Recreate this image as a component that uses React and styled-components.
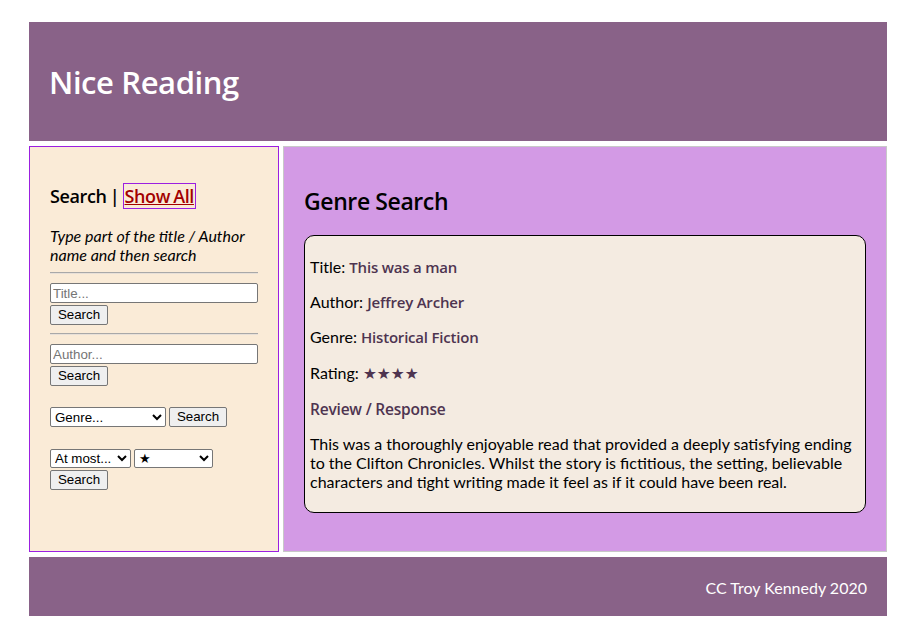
import React from "react";
import styled, { createGlobalStyle } from "styled-components";

const Global = createGlobalStyle`
  html, body { margin: 0; padding: 0; background: #ffffff; }
  body { font-family: "Lato", "Liberation Sans", sans-serif; font-size: 16px; color: #000; }
`;

const heading = `"Open Sans", "Noto Sans", sans-serif`;

const Page = styled.div`
  width: 858px;
  margin: 22px 0 0 29px;
  display: grid;
  grid-template-columns: 250px 604px;
  column-gap: 4px;
  row-gap: 5px;
`;

const Header = styled.header`
  grid-column: 1 / -1;
  height: 119px;
  background: #896288;
  display: flex;
  align-items: center;
  padding: 0 20px;
  box-sizing: border-box;
`;

const Title = styled.h1`
  margin: 0;
  font-family: ${heading};
  font-weight: 600;
  font-size: 31px;
  letter-spacing: -0.4px;
  color: #ffffff;
  line-height: 1;
  padding-top: 1px;
`;

const Aside = styled.aside`
  background: #faebd7;
  border: 1px solid #9b1fe0;
  padding: 20px;
  display: flex;
  flex-direction: column;
  align-items: flex-start;
`;

const SideHeading = styled.h3`
  margin: 18px 0 0;
  font-family: ${heading};
  font-weight: 600;
  font-size: 18px;
  letter-spacing: -0.4px;
  word-spacing: -1px;
  line-height: 22px;
  color: #000;
`;

const ShowAll = styled.a`
  color: #a30000;
  text-decoration: underline;
  border: 1px solid #9b1fe0;
  padding: 0 1px;
`;

const Hint = styled.p`
  margin: 19px 0 0;
  font-style: italic;
  font-size: 16px;
  line-height: 19px;
`;

const Rule = styled.hr`
  align-self: stretch;
  margin: 8px 0 9px;
  border: 0;
  border-top: 1px solid #a8a8a8;
  border-bottom: 1px solid #e8e0d8;
  height: 0;
`;

const TextInput = styled.input`
  box-sizing: border-box;
  width: 208px;
  height: 20px;
  margin: 0;
  padding: 1px 2px;
  border: 1px solid #767676;
  border-radius: 2px;
  background: #fff;
  font-family: "Liberation Sans", Arial, sans-serif;
  font-size: 13.33px;
  &::placeholder { color: #757575; }
`;

const Button = styled.button`
  box-sizing: border-box;
  height: 20px;
  width: 58px;
  margin: ${(p) => p.$top || 0}px 0 0;
  padding: 0 6px;
  border: 1px solid #767676;
  border-radius: 2px;
  background: #efefef;
  color: #000;
  font-family: "Liberation Sans", Arial, sans-serif;
  font-size: 13.33px;
  line-height: 16px;
`;

const Row = styled.div`
  display: flex;
  align-items: center;
  gap: 3px;
  margin-top: ${(p) => p.$top}px;
`;

const Select = styled.select`
  box-sizing: border-box;
  width: ${(p) => p.$w}px;
  height: ${(p) => p.$h || 20}px;
  margin: 0;
  padding: 0;
  border: 1px solid #767676;
  border-radius: 2px;
  background: #fff;
  color: #000;
  font-family: "Liberation Sans", Arial, sans-serif;
  font-size: 13.33px;
`;

const Main = styled.main`
  background: #d39ae5;
  border: 1px solid #c8c8c8;
  padding: 20px 20px 38px;
`;

const MainHeading = styled.h2`
  margin: 20px 0 20px;
  font-family: ${heading};
  font-weight: 600;
  font-size: 23px;
  letter-spacing: -0.4px;
  line-height: 28px;
  color: #000;
`;

const Card = styled.section`
  background: #f4ebe1;
  border: 1px solid #000;
  border-radius: 10px;
  padding: 5px;
`;

const Line = styled.p`
  margin: ${(p) => p.$top || 16}px 0 16px;
  font-size: 16px;
  line-height: 19px;
`;

const Value = styled.span`
  font-family: ${heading};
  font-weight: 600;
  font-size: 15px;
  letter-spacing: -0.2px;
  line-height: 15px;
  color: #4e3450;
`;

const Stars = styled.span`
  color: #4e3450;
  font-family: "DejaVu Sans", sans-serif;
  font-size: 15.5px;
  line-height: 15px;
`;

const Review = styled.h4`
  margin: 18px 0 15px;
  font-family: ${heading};
  font-weight: 600;
  font-size: 15.5px;
  letter-spacing: -0.2px;
  line-height: 19px;
  color: #4e3450;
`;

const Footer = styled.footer`
  grid-column: 1 / -1;
  height: 59px;
  background: #896288;
  display: flex;
  align-items: center;
  justify-content: flex-end;
  padding: 1px 20px 0;
  box-sizing: border-box;
  color: #ffffff;
  font-size: 16px;
`;

export default function App() {
  return (
    <>
      <Global />
      <Page>
        <Header>
          <Title>Nice Reading</Title>
        </Header>
        <Aside>
          <SideHeading>
            Search | <ShowAll href="#">Show All</ShowAll>
          </SideHeading>
          <Hint>Type part of the title / Author name and then search</Hint>
          <Rule />
          <TextInput placeholder="Title..." />
          <Button $top={2}>Search</Button>
          <Rule />
          <TextInput placeholder="Author..." />
          <Button $top={2}>Search</Button>
          <Row $top={21}>
            <Select $w={116}>
              <option>Genre...</option>
            </Select>
            <Button>Search</Button>
          </Row>
          <Row $top={22}>
            <Select $w={81} $h={19}>
              <option>At most...</option>
            </Select>
            <Select $w={79} $h={19}>
              <option>★</option>
            </Select>
          </Row>
          <Button $top={2}>Search</Button>
        </Aside>
        <Main>
          <MainHeading>Genre Search</MainHeading>
          <Card>
            <Line>
              Title: <Value>This was a man</Value>
            </Line>
            <Line>
              Author: <Value>Jeffrey Archer</Value>
            </Line>
            <Line>
              Genre: <Value>Historical Fiction</Value>
            </Line>
            <Line $top={17}>
              Rating: <Stars>★★★★</Stars>
            </Line>
            <Review>Review / Response</Review>
            <Line $top={15}>
              This was a thoroughly enjoyable read that provided a deeply satisfying ending
              to the Clifton Chronicles. Whilst the story is fictitious, the setting, believable
              characters and tight writing made it feel as if it could have been real.
            </Line>
          </Card>
        </Main>
        <Footer>CC Troy Kennedy 2020</Footer>
      </Page>
    </>
  );
}
